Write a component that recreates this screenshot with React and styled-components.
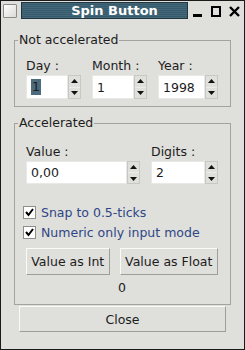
import styled, { createGlobalStyle } from "styled-components";

const GlobalStyle = createGlobalStyle`
  html, body {
    margin: 0;
    padding: 0;
    background: #dfdfdb;
  }
  * {
    box-sizing: border-box;
  }
`;

// *** [ window frame ] ***
const Window = styled.div`
  width: 245px;
  height: 350px;
  border: 1px solid #1a1a1a;
  background: #dfdfdb;
  font-family: "DejaVu Sans", "Liberation Sans", sans-serif;
  font-size: 12.5px;
  color: #1c1c1c;
  display: flex;
  flex-direction: column;
`;

const TitleBar = styled.div`
  height: 19px;
  display: flex;
  align-items: center;
  padding: 0 4px 0 2px;
`;

const MenuBox = styled.div`
  width: 14px;
  height: 14px;
  border: 1px solid #8c8c88;
  background: linear-gradient(135deg, #ffffff 0%, #dadad6 100%);
  border-radius: 1px;
`;

const TitleStrip = styled.div`
  width: 167px;
  height: 17px;
  margin-left: 4px;
  border: 1px solid #22343e;
  background: repeating-linear-gradient(
    to bottom,
    #41677a 0px,
    #41677a 1px,
    #385a6b 1px,
    #385a6b 2px
  );
  color: #fff;
  font-weight: bold;
  font-size: 13px;
  display: flex;
  align-items: center;
  justify-content: center;
  padding-left: 20px;
`;

const WinControls = styled.div`
  flex: 1;
  display: flex;
  align-items: center;
  justify-content: space-between;
  margin-left: 5px;
  svg {
    display: block;
  }
`;

// *** [ content ] ***
const Body = styled.div`
  flex: 1;
  display: flex;
  flex-direction: column;
  padding: 13px 13px 0 13px;
`;

const Group = styled.fieldset`
  margin: 0;
  border: 1px solid #a3a39f;
  padding: ${(p) => p.$pad};
  min-width: 0;
  display: flex;
  flex-direction: column;
`;

const Legend = styled.legend`
  padding: 0 1px;
  margin-left: -8px;
  line-height: 14px;
`;

const Row = styled.div`
  display: flex;
  gap: 11px;
`;

const Field = styled.div`
  display: flex;
  flex-direction: column;
  gap: 2px;
  width: ${(p) => p.$w}px;
`;

const Label = styled.span`
  line-height: 14px;
`;

const SpinBox = styled.div`
  display: flex;
  height: ${(p) => p.$h}px;
`;

const Entry = styled.div`
  flex: 1;
  background: #fff;
  border: 1px solid #e8e8e4;
  display: flex;
  align-items: center;
  padding-left: 4px;
`;

const Selected = styled.span`
  background: #4c6b7c;
  color: #1c1c1c;
  line-height: 16px;
  padding: 0 1px;
`;

const Arrows = styled.div`
  width: 13px;
  display: flex;
  flex-direction: column;
  border: 1px solid #c7c7c3;
  background: #dfdfdb;
`;

const ArrowBtn = styled.div`
  flex: 1;
  display: flex;
  align-items: center;
  justify-content: center;
  border-top: ${(p) => (p.$down ? "1px solid #ececea" : "none")};
`;

const CheckList = styled.div`
  display: flex;
  flex-direction: column;
  margin: 18px 0 0 -3px;
`;

const CheckRow = styled.label`
  display: flex;
  align-items: center;
  gap: 5px;
  height: 20px;
  color: #2e4686;
`;

const CheckBox = styled.span`
  width: 13px;
  height: 13px;
  background: #fff;
  border: 1px solid #8e8e8a;
  display: flex;
  align-items: center;
  justify-content: center;
`;

const ButtonRow = styled.div`
  display: flex;
  gap: 10px;
  margin-top: 6px;
`;

const Button = styled.button`
  font-family: inherit;
  font-size: 12.5px;
  color: #1c1c1c;
  background: #dfdfdb;
  height: ${(p) => p.$h}px;
  width: ${(p) => p.$w}px;
  border: 1px solid;
  border-color: #fafaf8 #9d9d99 #9d9d99 #fafaf8;
  padding: 0;
`;

const CloseButton = styled(Button)`
  margin: 1px 0 0 5px;
`;

const Result = styled.div`
  text-align: center;
  line-height: 14px;
  margin-top: 6px;
`;

function ArrowUp() {
  return (
    <svg width="7" height="5" viewBox="0 0 7 5">
      <path d="M3.5 0 L7 4 L0 4 Z" fill="#111" />
    </svg>
  );
}

function ArrowDown() {
  return (
    <svg width="7" height="5" viewBox="0 0 7 5">
      <path d="M0 1 L7 1 L3.5 5 Z" fill="#111" />
    </svg>
  );
}

function Spin({ value, h = 24, selected }) {
  return (
    <SpinBox $h={h}>
      <Entry>{selected ? <Selected>{value}</Selected> : value}</Entry>
      <Arrows>
        <ArrowBtn>
          <ArrowUp />
        </ArrowBtn>
        <ArrowBtn $down>
          <ArrowDown />
        </ArrowBtn>
      </Arrows>
    </SpinBox>
  );
}

function Check({ children }) {
  return (
    <CheckRow>
      <CheckBox>
        <svg width="9" height="9" viewBox="0 0 9 9">
          <path d="M1 4 L3.5 7 L8 1" stroke="#000" strokeWidth="2" fill="none" />
        </svg>
      </CheckBox>
      {children}
    </CheckRow>
  );
}

export default function App() {
  return (
    <>
      <GlobalStyle />
      <Window>
        <TitleBar>
          <MenuBox />
          <TitleStrip>Spin Button</TitleStrip>
          <WinControls>
            <svg width="10" height="12" viewBox="0 0 10 12">
              <rect x="0" y="9" width="9" height="3" fill="#000" />
            </svg>
            <svg width="10" height="12" viewBox="0 0 10 12">
              <rect x="1" y="2" width="8" height="9" stroke="#000" strokeWidth="2" fill="none" />
            </svg>
            <svg width="11" height="12" viewBox="0 0 11 12">
              <path d="M1 2 L10 11 M10 2 L1 11" stroke="#000" strokeWidth="2.4" />
            </svg>
          </WinControls>
        </TitleBar>

        <Body>
          <Group $pad="12px 12px 7px 11px">
            <Legend>Not accelerated</Legend>
            <Row>
              <Field $w={55}>
                <Label>Day :</Label>
                <Spin value="1" selected />
              </Field>
              <Field $w={55}>
                <Label>Month :</Label>
                <Spin value="1" />
              </Field>
              <Field $w={60}>
                <Label>Year :</Label>
                <Spin value="1998" />
              </Field>
            </Row>
          </Group>

          <Group $pad="15px 12px 9px 11px" style={{ marginTop: 9 }}>
            <Legend>Accelerated</Legend>
            <Row>
              <Field $w={114}>
                <Label>Value :</Label>
                <Spin value="0,00" h={23} />
              </Field>
              <Field $w={67}>
                <Label>Digits :</Label>
                <Spin value="2" h={23} />
              </Field>
            </Row>
            <CheckList>
              <Check>Snap to 0.5-ticks</Check>
              <Check>Numeric only input mode</Check>
            </CheckList>
            <ButtonRow>
              <Button $w={84} $h={27}>Value as Int</Button>
              <Button $w={99} $h={27}>Value as Float</Button>
            </ButtonRow>
            <Result>0</Result>
          </Group>

          <CloseButton $w={207} $h={26}>Close</CloseButton>
        </Body>
      </Window>
    </>
  );
}
